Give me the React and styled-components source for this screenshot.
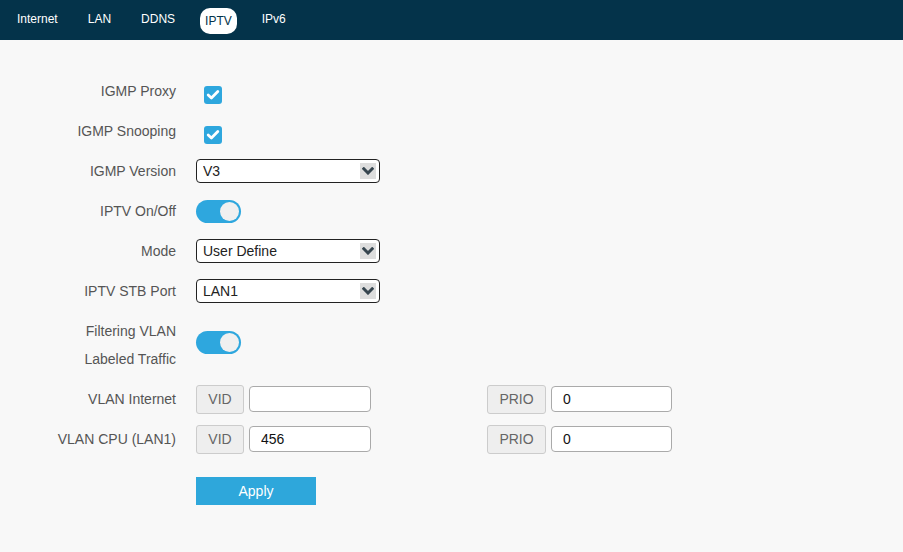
import React, { useState } from "react";
import styled, { createGlobalStyle } from "styled-components";

const GlobalStyle = createGlobalStyle`
  html, body {
    margin: 0;
    padding: 0;
    height: 100%;
    background: #f8f8f8;
  }
  body {
    font-family: "Liberation Sans", Arial, sans-serif;
  }
`;

const Page = styled.div`
  width: 903px;
  min-height: 552px;
  background: #f8f8f8;
`;

const Header = styled.nav`
  height: 40px;
  background: #04334a;
  display: flex;
  align-items: flex-start;
  gap: 20px;
  padding: 8px 0 0 12px;
  box-sizing: border-box;
`;

const Tab = styled.div`
  height: 26px;
  box-sizing: border-box;
  padding: ${(p) => (p.$active ? "6px 5px 6px" : "4px 5px 8px")};
  font-size: 12px;
  line-height: 14px;
  border-radius: 10px;
  color: ${(p) => (p.$active ? "#04334a" : "#ffffff")};
  background: ${(p) => (p.$active ? "#ffffff" : "transparent")};
`;

const Form = styled.div`
  padding-top: 31px;
`;

const Row = styled.div`
  display: grid;
  grid-template-columns: 176px auto;
  column-gap: 20px;
  align-items: center;
  min-height: 40px;
  padding: ${(p) => p.$pad || "0"};
  box-sizing: border-box;
`;

const Label = styled.div`
  text-align: right;
  font-size: 14px;
  line-height: 28px;
  color: #555555;
  align-self: ${(p) => (p.$top ? "start" : "center")};
  margin-top: ${(p) => (p.$top ? "6px" : "0")};
`;

const Control = styled.div`
  display: flex;
  align-items: center;
`;

const Check = styled.span`
  width: 18px;
  height: 18px;
  margin: 8px 0 0 8px;
  border-radius: 3px;
  background: #2ea7de;
  display: flex;
  align-items: center;
  justify-content: center;
`;

const SelectWrap = styled.div`
  position: relative;
  width: 184px;
  height: 24px;
`;

const Select = styled.select`
  appearance: none;
  width: 100%;
  height: 100%;
  box-sizing: border-box;
  border: 1px solid #222;
  border-radius: 4px;
  background: #fff;
  padding: 0 0 0 6px;
  font-family: "Liberation Sans", Arial, sans-serif;
  font-size: 14px;
  color: #222;
  outline: none;
`;

const ArrowBox = styled.span`
  position: absolute;
  right: 4px;
  top: 4px;
  width: 16px;
  height: 16px;
  background: #dddddd;
  display: flex;
  align-items: center;
  justify-content: center;
  pointer-events: none;
`;

const Toggle = styled.span`
  width: 45px;
  height: 23px;
  border-radius: 12px;
  background: #2ea7de;
  display: flex;
  align-items: center;
  justify-content: ${(p) => (p.$on ? "flex-end" : "flex-start")};
  padding: 0 2px;
  box-sizing: border-box;
  cursor: pointer;
`;

const Knob = styled.span`
  width: 19px;
  height: 19px;
  border-radius: 50%;
  background: #f0f0f0;
`;

const Pair = styled.div`
  display: grid;
  grid-template-columns: 291px auto;
  align-items: center;
`;

const Group = styled.div`
  display: flex;
  align-items: center;
  gap: 5px;
`;

const Addon = styled.span`
  width: ${(p) => p.$w}px;
  height: 29px;
  box-sizing: border-box;
  border: 1px solid #cccccc;
  border-radius: 3px;
  background: #eeeeee;
  color: #666666;
  font-size: 14px;
  display: flex;
  align-items: center;
  justify-content: center;
`;

const Input = styled.input`
  width: ${(p) => p.$w}px;
  height: 26px;
  box-sizing: border-box;
  border: 1px solid #aaaaaa;
  border-radius: 4px;
  background: #fff;
  padding: 0 11px;
  font-family: "Liberation Sans", Arial, sans-serif;
  font-size: 14px;
  color: #111;
  outline: none;
`;

const ApplyButton = styled.button`
  margin: 18px 0 0 196px;
  width: 120px;
  height: 28px;
  border: none;
  background: #2ea7db;
  color: #fff;
  font-family: "Liberation Sans", Arial, sans-serif;
  font-size: 14px;
  cursor: pointer;
`;

const Chevron = () => (
  <svg width="12" height="8" viewBox="0 0 12 8">
    <path d="M1.8 1.8 L6 6 L10.2 1.8" fill="none" stroke="#36454f" strokeWidth="3" strokeLinecap="square" />
  </svg>
);

const Tick = () => (
  <svg width="14" height="12" viewBox="0 0 14 12">
    <path d="M2.2 6 L5.4 9 L11.8 2.6" fill="none" stroke="#fff" strokeWidth="2.8" strokeLinecap="round" strokeLinejoin="round" />
  </svg>
);

function Dropdown({ value, options }) {
  return (
    <SelectWrap>
      <Select defaultValue={value}>
        {options.map((o) => (
          <option key={o}>{o}</option>
        ))}
      </Select>
      <ArrowBox>
        <Chevron />
      </ArrowBox>
    </SelectWrap>
  );
}

function Switch() {
  const [on, setOn] = useState(true);
  return (
    <Toggle $on={on} onClick={() => setOn(!on)}>
      <Knob />
    </Toggle>
  );
}

const tabs = ["Internet", "LAN", "DDNS", "IPTV", "IPv6"];

export default function App() {
  return (
    <Page>
      <GlobalStyle />
      <Header>
        {tabs.map((t) => (
          <Tab key={t} $active={t === "IPTV"}>
            {t}
          </Tab>
        ))}
      </Header>
      <Form>
        <Row>
          <Label>IGMP Proxy</Label>
          <Control>
            <Check>
              <Tick />
            </Check>
          </Control>
        </Row>
        <Row>
          <Label>IGMP Snooping</Label>
          <Control>
            <Check>
              <Tick />
            </Check>
          </Control>
        </Row>
        <Row>
          <Label>IGMP Version</Label>
          <Control>
            <Dropdown value="V3" options={["V2", "V3"]} />
          </Control>
        </Row>
        <Row>
          <Label>IPTV On/Off</Label>
          <Control>
            <Switch />
          </Control>
        </Row>
        <Row>
          <Label>Mode</Label>
          <Control>
            <Dropdown value="User Define" options={["Bridge", "User Define"]} />
          </Control>
        </Row>
        <Row>
          <Label>IPTV STB Port</Label>
          <Control>
            <Dropdown value="LAN1" options={["LAN1", "LAN2", "LAN3"]} />
          </Control>
        </Row>
        <Row $pad="0 0 6px">
          <Label $top>
            Filtering VLAN
            <br />
            Labeled Traffic
          </Label>
          <Control>
            <Switch />
          </Control>
        </Row>
        <Row>
          <Label>VLAN Internet</Label>
          <Pair>
            <Group>
              <Addon $w={48}>VID</Addon>
              <Input $w={122} defaultValue="" />
            </Group>
            <Group>
              <Addon $w={59}>PRIO</Addon>
              <Input $w={121} defaultValue="0" />
            </Group>
          </Pair>
        </Row>
        <Row>
          <Label>VLAN CPU (LAN1)</Label>
          <Pair>
            <Group>
              <Addon $w={48}>VID</Addon>
              <Input $w={122} defaultValue="456" />
            </Group>
            <Group>
              <Addon $w={59}>PRIO</Addon>
              <Input $w={121} defaultValue="0" />
            </Group>
          </Pair>
        </Row>
        <ApplyButton>Apply</ApplyButton>
      </Form>
    </Page>
  );
}
